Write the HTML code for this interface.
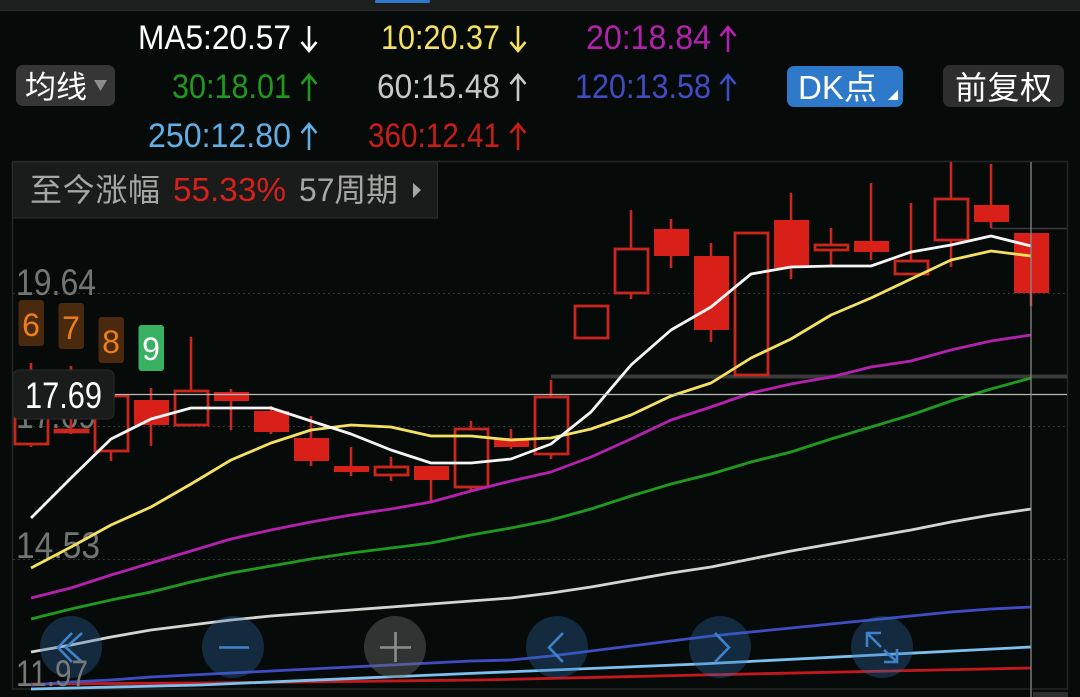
<!DOCTYPE html>
<html><head><meta charset="utf-8">
<style>
html,body{margin:0;padding:0;background:#060a08;width:1080px;height:697px;overflow:hidden}
svg{display:block}
text{font-family:"Liberation Sans","Noto Sans CJK SC",sans-serif}
</style></head>
<body>
<svg width="1080" height="697" viewBox="0 0 1080 697" xmlns="http://www.w3.org/2000/svg">
<rect width="1080" height="697" fill="#060a08"/>
<!-- top strip -->
<rect width="1080" height="10" fill="#1b1f1d"/>
<rect y="10" width="1080" height="1" fill="#2a2d2b"/>
<rect x="375" y="0" width="55" height="3" rx="1" fill="#2e78cc"/>
<!-- grid -->
<g fill="none">
<path d="M12 161.500H1067.500V689H12.500V161" stroke="#242625" stroke-width="1.500"/>
<path d="M13 293.500H1067M13 426.500H1067M13 559.500H1067" stroke="#333533" stroke-width="1" stroke-dasharray="2 3"/>
<path d="M991 228.500H1067" stroke="#3c3c3c" stroke-width="1.500"/>
<path d="M551 376.500H1067" stroke="#3a3a3a" stroke-width="4"/>
</g>
<!-- axis labels under lines -->
<g font-size="37" fill="#737573">
<text x="16" y="295" textLength="80" lengthAdjust="spacingAndGlyphs">19.64</text>
<text x="16" y="558" textLength="84" lengthAdjust="spacingAndGlyphs">14.53</text>
<text x="16" y="428" textLength="80" lengthAdjust="spacingAndGlyphs">17.69</text>
</g>
<!-- candles wicks -->
<g stroke="#c9261e" stroke-width="2.600" fill="none">
<path d="M31 363V396M31 444V447M71 366V434M111 451V461M151 388V446M191 337V391M231 389V430M271 406V434M311 416V466M351 447V476M391 457V467M391 475V481M431 480V501M471 421V429M471 487V491M511 429V449M551 380V397M551 454V459M631 210V249M631 293V299M671 219V268M711 243V342M791 193V279M831 228V245M831 250V266M871 183V260M911 203V261M951 162V199M951 240V267M991 164V228M1031 293V306"/>
<g stroke-width="2.800">
<rect x="15" y="396" width="33" height="48"/>
<rect x="55" y="430" width="33" height="2"/>
<rect x="95" y="396" width="33" height="55"/>
<rect x="175" y="391" width="33" height="34"/>
<rect x="375" y="467" width="33" height="8"/>
<rect x="455" y="429" width="33" height="58"/>
<rect x="535" y="397" width="33" height="57"/>
<rect x="575" y="306" width="33" height="32"/>
<rect x="615" y="249" width="33" height="44"/>
<rect x="735" y="233" width="33" height="142"/>
<rect x="815" y="245" width="33" height="5"/>
<rect x="895" y="261" width="33" height="13"/>
<rect x="935" y="199" width="33" height="41"/>
</g>
</g>
<g fill="#d81f18">
<rect x="134" y="400" width="35" height="25"/>
<rect x="214" y="392" width="35" height="9"/>
<rect x="254" y="411" width="35" height="21"/>
<rect x="294" y="438" width="35" height="23"/>
<rect x="334" y="466" width="35" height="6"/>
<rect x="414" y="466" width="35" height="14"/>
<rect x="494" y="438" width="35" height="9"/>
<rect x="654" y="229" width="35" height="27"/>
<rect x="694" y="256" width="35" height="74"/>
<rect x="774" y="220" width="35" height="48"/>
<rect x="854" y="241" width="35" height="11"/>
<rect x="974" y="205" width="35" height="17"/>
<rect x="1014" y="233" width="35" height="60"/>
</g>
<!-- moving averages -->
<g fill="none" stroke-linejoin="round" stroke-width="2.800">
<polyline stroke="#c4181c" points="31,684 200,683 480,680 700,675 1031,668"/>
<polyline stroke="#7cc0ee" points="31,689 200,685 480,673 700,664 1031,647"/>
<polyline stroke="#3f4cc4" points="31,685 71,682 111,680 151,677 191,675 231,673 271,671 311,669 351,667 391,665 431,663 471,661 511,660 551,656 591,651 631,646 671,641 711,636 751,632 791,628 831,624 871,620 911,616 951,612 991,609 1031,607"/>
<polyline stroke="#d4d4d0" points="31,652 71,645 111,637 151,630 191,625 231,620 271,616 311,613 351,610 391,607 431,604 471,601 511,598 551,593 591,587 631,580 671,573 711,567 751,559 791,551 831,544 871,537 911,530 951,522 991,515 1031,509"/>
<polyline stroke="#1f9a1f" points="31,619 71,609 111,600 151,592 191,582 231,573 271,566 311,559 351,553 391,548 431,543 471,535 511,528 551,520 591,509 631,496 671,484 711,474 751,462 791,452 831,439 871,427 911,415 951,401 991,389 1031,378"/>
<polyline stroke="#b421ae" points="31,598 71,588 111,575 151,563 191,551 231,539 271,530 311,522 351,515 391,509 431,502 471,491 511,481 551,472 591,457 631,439 671,420 711,407 751,393 791,384 831,377 871,367 911,361 951,350 991,341 1031,335"/>
<polyline stroke="#f4e160" points="31,568 71,547 111,525 151,507 191,484 231,460 271,443 311,430 351,425 391,427 431,436 471,436 511,440 551,438 591,429 631,415 671,396 711,383 751,358 791,339 831,315 871,298 911,279 951,260 991,251 1031,256"/>
<polyline stroke="#f5f5f5" points="31,518 71,478 111,439 151,419 191,408 231,408 271,408 311,421 351,434 391,450 431,463 471,463 511,459 551,444 591,412 631,365 671,330 711,307 751,274 791,267 831,266 871,266 911,252 951,245 991,236 1031,246"/>
</g>
<!-- crosshair -->
<path d="M115 394.500H1067" stroke="#b8b8b4" stroke-width="1.300"/>
<path d="M1031 162V697" stroke="#8a8a88" stroke-width="1.500" opacity=".85"/>
<rect x="1033" y="692" width="35" height="5" fill="#2e2e2e"/>
<!-- circles -->
<circle cx="71" cy="647" r="31" fill="#2f6fb4" fill-opacity=".32"/>
<circle cx="233" cy="647" r="31" fill="#2f6fb4" fill-opacity=".32"/>
<circle cx="395" cy="647" r="31" fill="#707070" fill-opacity=".42"/>
<circle cx="557" cy="647" r="31" fill="#2f6fb4" fill-opacity=".32"/>
<circle cx="720" cy="647" r="31" fill="#2f6fb4" fill-opacity=".32"/>
<circle cx="882" cy="647" r="31" fill="#2f6fb4" fill-opacity=".32"/>
<g fill="none" stroke="#3f82cc" stroke-width="2.600">
<path d="M72 633L58 647.500L72 662M82 633L66 647.500L82 662"/>
<path d="M219 647.500H249"/>
<path d="M563 633L549 647.500L563 662"/>
<path d="M715 633L729 647.500L715 662"/>
<path d="M867 647V633H881M868 634L881 647M884 662H897V649M896 661L884 650"/>
</g>
<path d="M380 647.500H411M395.500 632V662" stroke="#8c8c8c" stroke-width="2.600" fill="none"/>
<text x="16" y="686" font-size="37" fill="#787a78" textLength="72" lengthAdjust="spacingAndGlyphs">11.97</text>
<!-- badges -->
<rect x="18.500" y="300" width="25.500" height="46" rx="3" fill="#4a2a0e"/>
<rect x="58.500" y="303" width="25.500" height="46" rx="3" fill="#4a2a0e"/>
<rect x="98.500" y="317" width="25.500" height="46" rx="3" fill="#4a2a0e"/>
<rect x="138.500" y="325" width="25.500" height="46" rx="3" fill="#38b163"/>
<g font-size="32" text-anchor="middle" fill="#ee7f1c">
<text x="31" y="336">6</text>
<text x="71" y="339">7</text>
<text x="111" y="353">8</text>
<text x="151" y="360" fill="#fff">9</text>
</g>
<!-- price tag -->
<rect x="13" y="370" width="101" height="49" rx="6" fill="#1a1c1b" stroke="#2b2d2c"/>
<text x="25" y="408" font-size="37" fill="#fff" textLength="77" lengthAdjust="spacingAndGlyphs">17.69</text>
<!-- MA rows -->
<g font-size="34">
<text x="138" y="49" fill="#fff" textLength="153" lengthAdjust="spacingAndGlyphs">MA5:20.57</text>
<text x="381" y="49" fill="#f4e160" textLength="119" lengthAdjust="spacingAndGlyphs">10:20.37</text>
<text x="586" y="49" fill="#b421ae" textLength="125" lengthAdjust="spacingAndGlyphs">20:18.84</text>
<text x="172" y="98" fill="#1f9a1f" textLength="119" lengthAdjust="spacingAndGlyphs">30:18.01</text>
<text x="377" y="98" fill="#c8c8c8" textLength="123" lengthAdjust="spacingAndGlyphs">60:15.48</text>
<text x="575" y="98" fill="#3f4cc4" textLength="136" lengthAdjust="spacingAndGlyphs">120:13.58</text>
<text x="148" y="147" fill="#62aee6" textLength="143" lengthAdjust="spacingAndGlyphs">250:12.80</text>
<text x="368" y="147" fill="#c81e18" textLength="132" lengthAdjust="spacingAndGlyphs">360:12.41</text>
</g>
<g fill="none" stroke-width="2.600">
<path d="M309 26V51M301.500 42L309 51L316.500 42" stroke="#fff"/>
<path d="M518 26V51M510.500 42L518 51L525.500 42" stroke="#f4e160"/>
<path d="M728 27V52M720.500 36L728 27L735.500 36" stroke="#b421ae"/>
<path d="M309 75V101M301.500 84L309 75L316.500 84" stroke="#1f9a1f"/>
<path d="M518 75V101M510.500 84L518 75L525.500 84" stroke="#c8c8c8"/>
<path d="M728 75V101M720.500 84L728 75L735.500 84" stroke="#3f4cc4"/>
<path d="M309 124V150M301.500 133L309 124L316.500 133" stroke="#62aee6"/>
<path d="M518 124V150M510.500 133L518 124L525.500 133" stroke="#c81e18"/>
</g>
<!-- buttons -->
<rect x="16" y="65" width="99" height="41" rx="7" fill="#363636"/>
<text x="25" y="98" font-size="31" fill="#fff" textLength="62">均线</text>
<path d="M94 80H107L100.500 91Z" fill="#8c8c8c"/>
<rect x="787" y="66" width="116" height="41" rx="7" fill="#2f79cb"/>
<text x="798" y="99" font-size="33" fill="#fff" textLength="79" lengthAdjust="spacingAndGlyphs">DK点</text>
<path d="M888 100H898V90Z" fill="#fff"/>
<rect x="943" y="65" width="121" height="42" rx="7" fill="#2e2e2e"/>
<text x="955" y="99" font-size="32" fill="#fff" textLength="97">前复权</text>
<!-- info strip -->
<rect x="12.500" y="162" width="425" height="56" fill="#1a1c1b" stroke="#2c2e2d"/>
<text x="30" y="201" font-size="32" fill="#a6a6a4" textLength="130">至今涨幅</text>
<text x="173" y="201" font-size="33" fill="#d8201a" textLength="113" lengthAdjust="spacingAndGlyphs">55.33%</text>
<text x="299" y="201" font-size="32" fill="#a6a6a4" textLength="99" lengthAdjust="spacingAndGlyphs">57周期</text>
<path d="M413 183L421 190L413 198Z" fill="#a6a6a4"/>
</svg>
</body></html>
